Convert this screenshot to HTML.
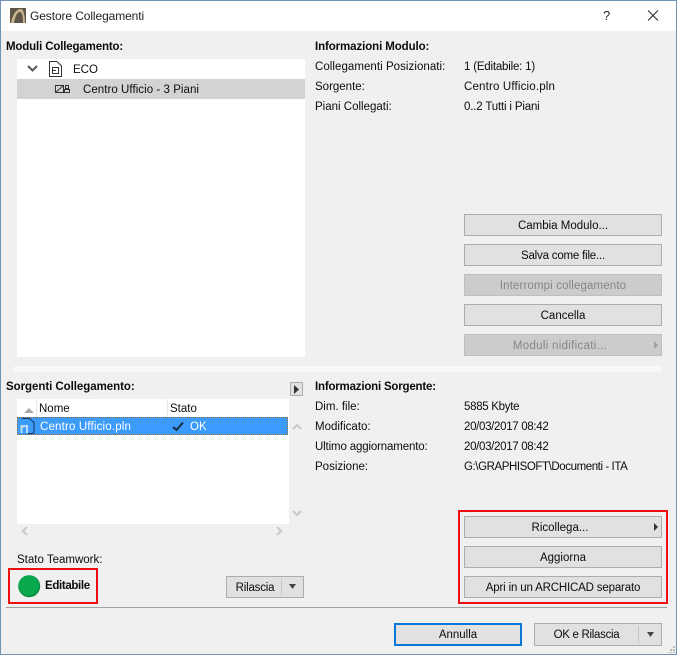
<!DOCTYPE html>
<html><head><meta charset="utf-8"><style>
html,body{margin:0;padding:0}
#w{position:relative;width:677px;height:655px;background:#f0f0f0;overflow:hidden;font-family:"Liberation Sans",sans-serif;font-size:11.5px;color:#0c0c0c}
#w div{position:absolute;box-sizing:border-box}
.t{white-space:nowrap;line-height:16px;height:16px;margin-top:1px}
.b{font-weight:bold;letter-spacing:-.15px}
.btn{left:464px;width:198px;height:22px;background:#e1e1e1;border:1px solid #adadad;text-align:center;line-height:22px}
.dis{background:#cccccc;border-color:#bfbfbf;color:#858585}
.red{border:2px solid #f01010}
</style></head><body><div id="w">
<div style="left:0;top:0;width:677px;height:31px;background:#fff"></div>
<div style="left:0;top:0;width:677px;height:655px;border:1px solid #6f93b5;z-index:5"></div>
<svg style="position:absolute;left:10px;top:8px" width="16" height="15"><rect width="16" height="15" fill="#5c5548"/><path d="M1 15C3 5 7 1 11 1C13 1 15 6 15 15L13 15C13 8 12 4 10 4C7 4 5 9 4 15Z" fill="#c9b48f"/></svg>
<div class="t" style="left:30px;top:8px;margin-top:0;font-size:12px;color:#222;letter-spacing:-.1px">Gestore Collegamenti</div>
<svg style="position:absolute;left:600px;top:8px" width="60" height="16"><text x="3" y="12" font-family="Liberation Sans" font-size="13" fill="#222">?</text><path d="M48 2.500L58 12.500M58 2.500L48 12.500" stroke="#222" fill="none"/></svg>

<div class="t b" style="left:6px;top:38px">Moduli Collegamento:</div>
<div style="left:17px;top:59px;width:288px;height:298px;background:#fff"></div>
<div style="left:17px;top:79px;width:288px;height:20px;background:#d3d3d3"></div>
<svg style="position:absolute;left:25px;top:60px" width="50" height="18"><path d="M3 6L7.500 10.500L12 6" stroke="#555" stroke-width="2" fill="none"/><path d="M24.500 1.500H32L36.500 6V16.500H24.500Z" fill="#fff" stroke="#333"/><path d="M27.500 7.500H33.500V13.500H27.500ZM27.500 10.500H31" fill="none" stroke="#333"/></svg>
<div class="t" style="left:73px;top:61px">ECO</div>
<svg style="position:absolute;left:54px;top:83px" width="18" height="12"><path d="M1.500 2.500H9.500V9.500H1.500ZM1.500 9.500L9.500 2.500" fill="none" stroke="#333"/><path d="M11.500 2.500H14.500V5.500H11.500ZM10.500 9.500V6.500H15.500V9.500Z" fill="none" stroke="#333"/></svg>
<div class="t" style="left:83px;top:81px;letter-spacing:.05px">Centro Ufficio - 3 Piani</div>

<div class="t b" style="left:315px;top:38px;letter-spacing:-.1px">Informazioni Modulo:</div>
<div class="t" style="left:315px;top:58px;letter-spacing:.05px">Collegamenti Posizionati:</div>
<div class="t" style="left:315px;top:78px">Sorgente:</div>
<div class="t" style="left:315px;top:98px">Piani Collegati:</div>
<div class="t" style="left:464px;top:58px;letter-spacing:-.2px">1 (Editabile: 1)</div>
<div class="t" style="left:464px;top:78px;letter-spacing:.17px">Centro Ufficio.pln</div>
<div class="t" style="left:464px;top:98px;letter-spacing:-.17px">0..2 Tutti i Piani</div>

<div class="btn" style="top:214px">Cambia Modulo...</div>
<div class="btn" style="top:244px;letter-spacing:-.2px">Salva come file...</div>
<div class="btn dis" style="top:274px;letter-spacing:.13px">Interrompi collegamento</div>
<div class="btn" style="top:304px">Cancella</div>
<div class="btn dis" style="top:334px;padding-right:6px;letter-spacing:.3px">Moduli nidificati...</div>
<svg style="position:absolute;left:653px;top:340px" width="6" height="10"><path d="M1 1L5 5L1 9Z" fill="#a0a0a0"/></svg>

<div style="left:14px;top:366px;width:647px;height:6px;background:#f8f8f8"></div>

<div class="t b" style="left:6px;top:378px;letter-spacing:-.05px">Sorgenti Collegamento:</div>
<div style="left:290px;top:382px;width:13px;height:14px;background:#e1e1e1;border:1px solid #adadad"></div>
<svg style="position:absolute;left:294px;top:385px" width="6" height="9"><path d="M0 0L5 4.500L0 9Z" fill="#333"/></svg>
<div style="left:17px;top:399px;width:272px;height:125px;background:#fff"></div>
<div style="left:36px;top:399px;width:1px;height:18px;background:#e8e8e8"></div>
<div style="left:167px;top:399px;width:1px;height:18px;background:#e8e8e8"></div>
<svg style="position:absolute;left:24px;top:407px" width="11" height="7"><path d="M0 6L5 1L10 6Z" fill="#aaa"/></svg>
<div class="t" style="left:39px;top:400px">Nome</div>
<div class="t" style="left:170px;top:400px">Stato</div>
<div style="left:17px;top:417px;width:271px;height:18px;background:#3c9bff;border:1px dotted #a06a30"></div>
<svg style="position:absolute;left:19px;top:417px" width="16" height="18"><path d="M3 1.500H10.500L15 5.500V15C15 16 14.500 16.500 13.500 16.500H9" fill="none" stroke="#17355a"/><path d="M1.500 8H9V16H1.500Z" fill="#bcdcff"/><path d="M3.500 16V11L7 9.500V16Z" fill="#3c9bff"/></svg>
<div class="t" style="left:40px;top:418px;color:#fff;letter-spacing:.17px">Centro Ufficio.pln</div>
<svg style="position:absolute;left:172px;top:420px" width="13" height="12"><path d="M1 7L4.500 10L11 2.500" stroke="#1c2c40" stroke-width="2" fill="none"/></svg>
<div class="t" style="left:190px;top:418px;color:#fff">OK</div>
<svg style="position:absolute;left:18px;top:420px;overflow:visible" width="290" height="115"><path d="M275 9L279 5L283 9M275 91L279 95L283 91" stroke="#c8c8c8" stroke-width="2" fill="none"/><path d="M9 107L5 111L9 115M259 107L263 111L259 115" stroke="#c8c8c8" stroke-width="2" fill="none"/></svg>

<div class="t b" style="left:315px;top:378px;letter-spacing:-.2px">Informazioni Sorgente:</div>
<div class="t" style="left:315px;top:398px">Dim. file:</div>
<div class="t" style="left:315px;top:418px">Modificato:</div>
<div class="t" style="left:315px;top:438px;letter-spacing:-.15px">Ultimo aggiornamento:</div>
<div class="t" style="left:315px;top:458px">Posizione:</div>
<div class="t" style="left:464px;top:398px;letter-spacing:-.3px">5885 Kbyte</div>
<div class="t" style="left:464px;top:418px;letter-spacing:-.32px">20/03/2017 08:42</div>
<div class="t" style="left:464px;top:438px;letter-spacing:-.32px">20/03/2017 08:42</div>
<div class="t" style="left:464px;top:458px;letter-spacing:-.42px">G:\GRAPHISOFT\Documenti - ITA</div>

<div class="t" style="left:17px;top:551px">Stato Teamwork:</div>
<div class="red" style="left:8px;top:568px;width:90px;height:36px"></div>
<svg style="position:absolute;left:18px;top:575px" width="23" height="23"><circle cx="11.200" cy="11.200" r="11" fill="#078a3e"/><circle cx="10.800" cy="10.500" r="10.200" fill="#0aa84c"/></svg>
<div class="t b" style="left:45px;top:577px;letter-spacing:-.35px">Editabile</div>
<div class="btn" style="left:226px;top:576px;width:78px;padding-right:20px;letter-spacing:-.2px">Rilascia</div>
<div style="left:281px;top:579px;width:1px;height:16px;background:#c4c4c4"></div>
<svg style="position:absolute;left:288px;top:584px" width="10" height="6"><path d="M1 0H8L4.500 5Z" fill="#444"/></svg>

<div class="red" style="left:458px;top:510px;width:210px;height:94px"></div>
<div class="btn" style="top:516px;padding-right:6px">Ricollega...</div>
<svg style="position:absolute;left:653px;top:522px" width="6" height="10"><path d="M1 1L5 5L1 9Z" fill="#333"/></svg>
<div class="btn" style="top:546px">Aggiorna</div>
<div class="btn" style="top:576px;letter-spacing:-.17px">Apri in un ARCHICAD separato</div>

<div style="left:6px;top:607px;width:661px;height:1px;background:#a0a0a0"></div>
<div class="btn" style="left:394px;top:623px;width:128px;height:23px;border:2px solid #0878d4;line-height:21px">Annulla</div>
<div class="btn" style="left:534px;top:623px;width:128px;height:23px;line-height:23px;padding-right:23px;letter-spacing:-.3px">OK e Rilascia</div>
<div style="left:638px;top:626px;width:1px;height:17px;background:#c4c4c4"></div>
<svg style="position:absolute;left:646px;top:632px" width="10" height="6"><path d="M1 0H8L4.500 5Z" fill="#444"/></svg>
<svg style="position:absolute;left:668px;top:645px" width="8" height="9"><path d="M5 1h2v2h-2zM2 4h2v2h-2zM5 4h2v2h-2zM0 7h1v1h-1zM2 7h2v1h-2zM5 7h2v1h-2z" fill="#bbb"/></svg>
</div></body></html>
